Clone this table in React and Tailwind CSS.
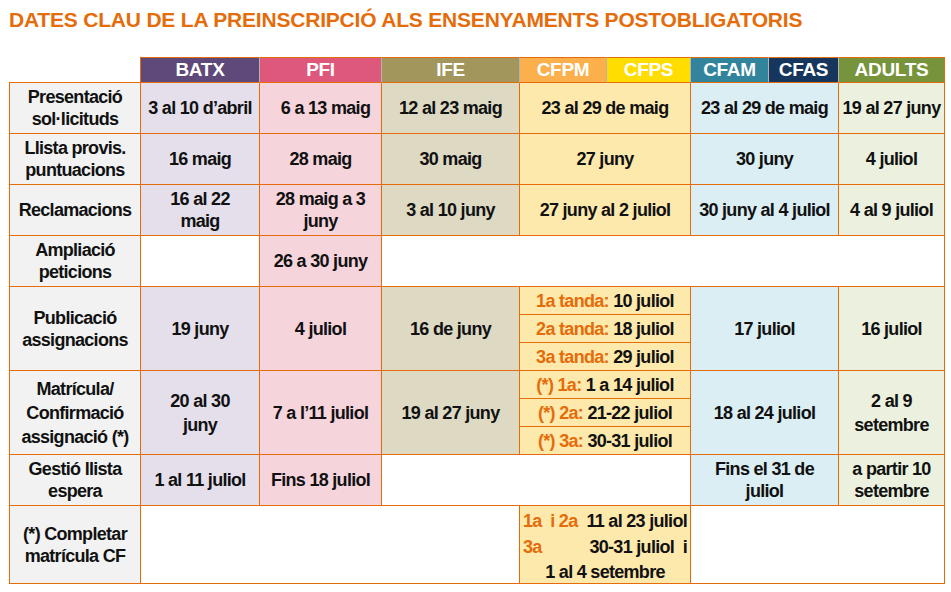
import React from "react";

const cell = "flex items-center justify-center text-center whitespace-nowrap border-r border-b border-[#e46c0a]";
const head = "flex items-center justify-center border-t border-b border-r border-t-[#e46c0a] border-b-[#e46c0a] border-r-[#b3b3b3] text-white text-[19px] tracking-[-0.3px]";
const sub = "flex flex-1 items-center justify-center whitespace-nowrap";

const App = () => {
  return (
    <div className="min-h-screen bg-white pl-[9px] pt-[8px] font-['Liberation_Sans_Narrow','Arial_Narrow','Liberation_Sans',sans-serif] font-bold text-[#111]">
      <h1 className="text-[21px] leading-[24px] text-[#e46c0a] tracking-[-0.2px] whitespace-nowrap">
        DATES CLAU DE LA PREINSCRIPCIÓ ALS ENSENYAMENTS POSTOBLIGATORIS
      </h1>

      <div className="mt-[25px] grid w-[936px] grid-cols-[132px_119px_122px_138px_87px_84px_78px_70px_106px] grid-rows-[26px_51px_51px_51px_51px_84px_84px_51px_78px] text-[18px] leading-[22px] tracking-[-0.7px]">
        {/* header */}
        <div className="border-r border-b border-[#e46c0a]" />
        <div className={`${head} bg-[#5f497a]`}>BATX</div>
        <div className={`${head} bg-[#dd587b]`}>PFI</div>
        <div className={`${head} bg-[#a3965c]`}>IFE</div>
        <div className={`${head} bg-[#fbb04b]`}>CFPM</div>
        <div className={`${head} bg-[#ffdd00]`}>CFPS</div>
        <div className={`${head} bg-[#31849b]`}>CFAM</div>
        <div className={`${head} bg-[#17365d]`}>CFAS</div>
        <div className={`${head} bg-[#77933c] border-r-[#e46c0a]`}>ADULTS</div>

        {/* Presentació */}
        <div className={`${cell} border-l bg-[#f2f2f2]`}>Presentació<br />sol·licituds</div>
        <div className={`${cell} bg-[#e5dfec]`}>3 al 10 d’abril</div>
        <div className={`${cell} bg-[#f6d4dc] pl-[10px]`}>6 a 13 maig</div>
        <div className={`${cell} bg-[#ddd9c3]`}>12 al 23 maig</div>
        <div className={`${cell} col-span-2 bg-[#fee9ad]`}>23 al 29 de maig</div>
        <div className={`${cell} col-span-2 bg-[#daeef3]`}>23 al 29 de maig</div>
        <div className={`${cell} bg-[#ebf1de]`}>19 al 27 juny</div>

        {/* Llista provis. */}
        <div className={`${cell} border-l bg-[#f2f2f2]`}>Llista provis.<br />puntuacions</div>
        <div className={`${cell} bg-[#e5dfec]`}>16 maig</div>
        <div className={`${cell} bg-[#f6d4dc]`}>28 maig</div>
        <div className={`${cell} bg-[#ddd9c3]`}>30 maig</div>
        <div className={`${cell} col-span-2 bg-[#fee9ad]`}>27 juny</div>
        <div className={`${cell} col-span-2 bg-[#daeef3]`}>30 juny</div>
        <div className={`${cell} bg-[#ebf1de]`}>4 juliol</div>

        {/* Reclamacions */}
        <div className={`${cell} border-l bg-[#f2f2f2]`}>Reclamacions</div>
        <div className={`${cell} bg-[#e5dfec]`}>16 al 22<br />maig</div>
        <div className={`${cell} bg-[#f6d4dc]`}>28 maig a 3<br />juny</div>
        <div className={`${cell} bg-[#ddd9c3]`}>3 al 10 juny</div>
        <div className={`${cell} col-span-2 bg-[#fee9ad]`}>27 juny al 2 juliol</div>
        <div className={`${cell} col-span-2 bg-[#daeef3]`}>30 juny al 4 juliol</div>
        <div className={`${cell} bg-[#ebf1de]`}>4 al 9 juliol</div>

        {/* Ampliació */}
        <div className={`${cell} border-l bg-[#f2f2f2]`}>Ampliació<br />peticions</div>
        <div className={`${cell} bg-white`} />
        <div className={`${cell} bg-[#f6d4dc]`}>26 a 30 juny</div>
        <div className={`${cell} col-span-6 bg-white`} />

        {/* Publicació */}
        <div className={`${cell} border-l bg-[#f2f2f2]`}>Publicació<br />assignacions</div>
        <div className={`${cell} bg-[#e5dfec]`}>19 juny</div>
        <div className={`${cell} bg-[#f6d4dc]`}>4 juliol</div>
        <div className={`${cell} bg-[#ddd9c3]`}>16 de juny</div>
        <div className="col-span-2 flex flex-col border-r border-b border-[#e46c0a] bg-[#fee9ad]">
          <div className={`${sub} border-b border-[#e46c0a]`}>
            <span className="text-[#e46c0a]">1a tanda:</span>&nbsp;10 juliol
          </div>
          <div className={`${sub} border-b border-[#e46c0a]`}>
            <span className="text-[#e46c0a]">2a tanda:</span>&nbsp;18 juliol
          </div>
          <div className={sub}>
            <span className="text-[#e46c0a]">3a tanda:</span>&nbsp;29 juliol
          </div>
        </div>
        <div className={`${cell} col-span-2 bg-[#daeef3]`}>17 juliol</div>
        <div className={`${cell} bg-[#ebf1de]`}>16 juliol</div>

        {/* Matrícula */}
        <div className={`${cell} border-l bg-[#f2f2f2] leading-[24px]`}>Matrícula/<br />Confirmació<br />assignació (*)</div>
        <div className={`${cell} bg-[#e5dfec] leading-[24px]`}>20 al 30<br />juny</div>
        <div className={`${cell} bg-[#f6d4dc]`}>7 a l’11 juliol</div>
        <div className={`${cell} bg-[#ddd9c3]`}>19 al 27 juny</div>
        <div className="col-span-2 flex flex-col border-r border-b border-[#e46c0a] bg-[#fee9ad]">
          <div className={`${sub} border-b border-[#e46c0a]`}>
            <span className="text-[#e46c0a]">(*) 1a:</span>&nbsp;1 a 14 juliol
          </div>
          <div className={`${sub} border-b border-[#e46c0a]`}>
            <span className="text-[#e46c0a]">(*) 2a:</span>&nbsp;21-22 juliol
          </div>
          <div className={sub}>
            <span className="text-[#e46c0a]">(*) 3a:</span>&nbsp;30-31 juliol
          </div>
        </div>
        <div className={`${cell} col-span-2 bg-[#daeef3]`}>18 al 24 juliol</div>
        <div className={`${cell} bg-[#ebf1de] leading-[24px]`}>2 al 9<br />setembre</div>

        {/* Gestió */}
        <div className={`${cell} border-l bg-[#f2f2f2]`}>Gestió llista<br />espera</div>
        <div className={`${cell} bg-[#e5dfec]`}>1 al 11 juliol</div>
        <div className={`${cell} bg-[#f6d4dc]`}>Fins 18 juliol</div>
        <div className={`${cell} col-span-3 bg-white`} />
        <div className={`${cell} col-span-2 bg-[#daeef3]`}>Fins el 31 de<br />juliol</div>
        <div className={`${cell} bg-[#ebf1de]`}>a partir 10<br />setembre</div>

        {/* Completar */}
        <div className={`${cell} border-l bg-[#f2f2f2]`}>(*) Completar<br />matrícula CF</div>
        <div className={`${cell} col-span-3 bg-white`} />
        <div className="col-span-2 flex flex-col whitespace-nowrap border-r border-b border-[#e46c0a] bg-[#fee9ad] px-[3px] pt-[3px] leading-[25.5px]">
          <div className="flex justify-between">
            <span className="text-[#e46c0a]">1a&nbsp; i 2a</span>
            <span>11 al 23 juliol</span>
          </div>
          <div className="flex justify-between">
            <span className="text-[#e46c0a]">3a</span>
            <span>30-31 juliol&nbsp; i</span>
          </div>
          <div className="text-center">1 al 4 setembre</div>
        </div>
        <div className={`${cell} col-span-3 bg-white`} />
      </div>
    </div>
  );
};

export default App;
